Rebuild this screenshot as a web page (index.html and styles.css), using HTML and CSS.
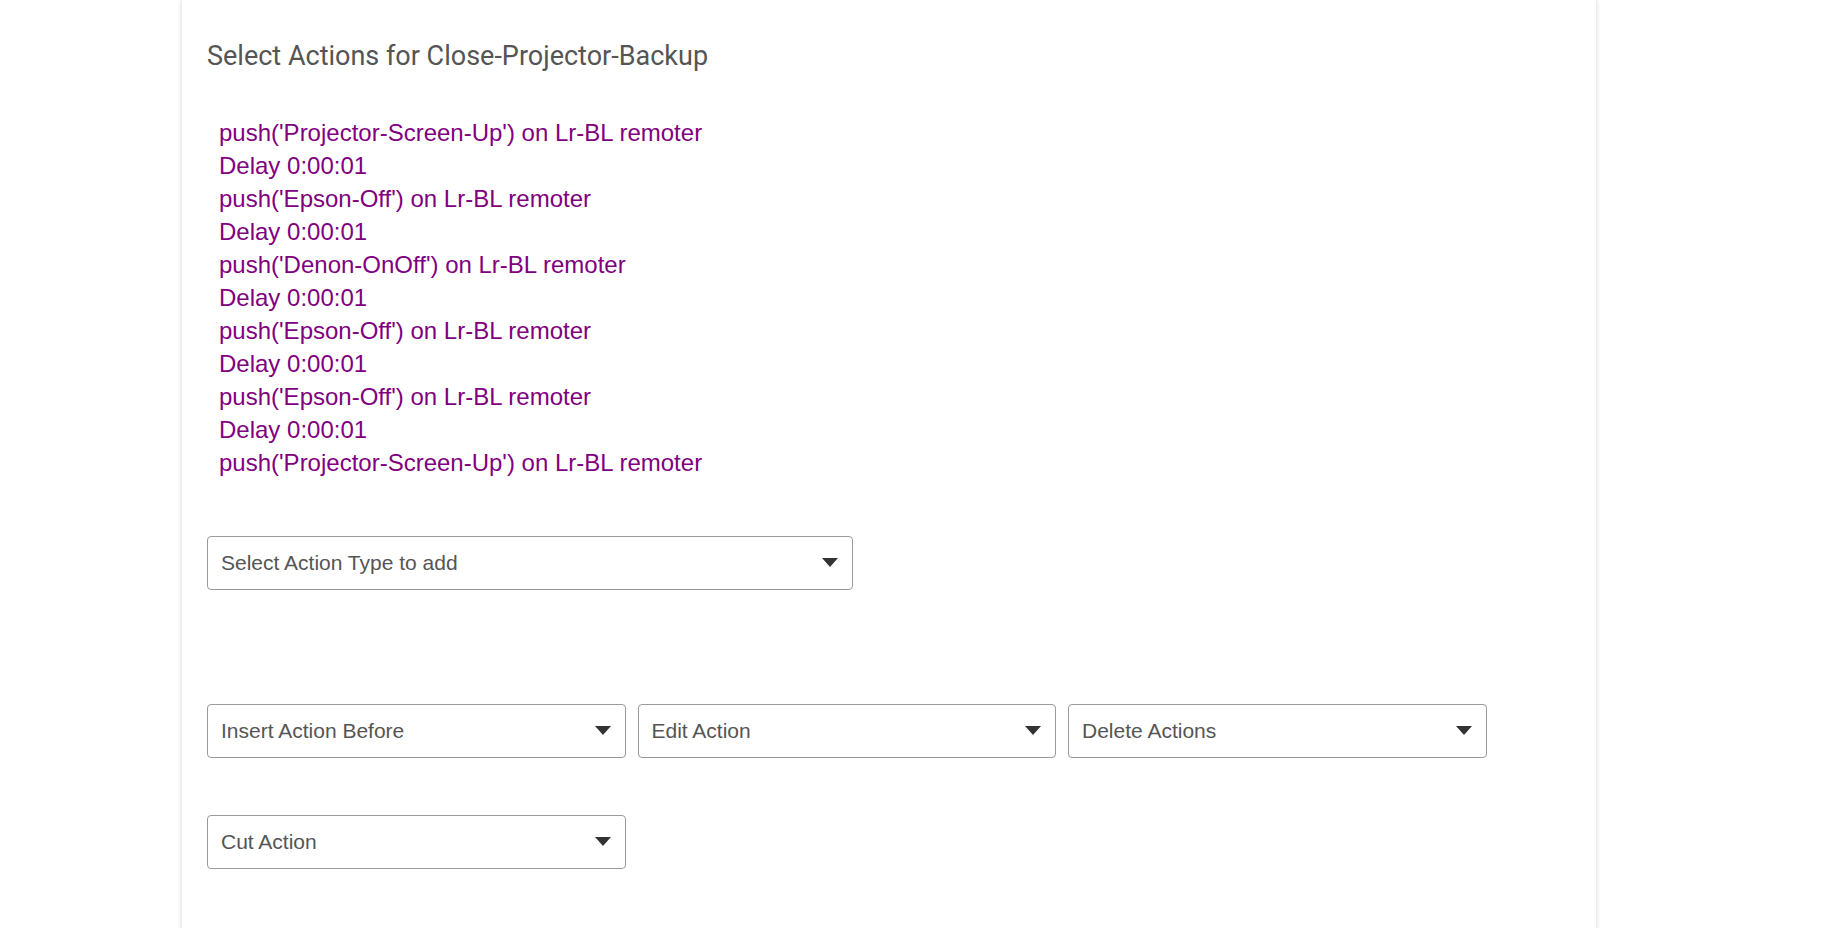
FILE: index.html
```html
<!DOCTYPE html>
<html>
<head>
<meta charset="utf-8">
<link rel="stylesheet" href="styles.css">
</head>
<body>
<div class="card">
  <h2 class="title">Select Actions for Close-Projector-Backup</h2>
  <ul class="actions">
    <li>push('Projector-Screen-Up') on Lr-BL remoter</li>
    <li>Delay 0:00:01</li>
    <li>push('Epson-Off') on Lr-BL remoter</li>
    <li>Delay 0:00:01</li>
    <li>push('Denon-OnOff') on Lr-BL remoter</li>
    <li>Delay 0:00:01</li>
    <li>push('Epson-Off') on Lr-BL remoter</li>
    <li>Delay 0:00:01</li>
    <li>push('Epson-Off') on Lr-BL remoter</li>
    <li>Delay 0:00:01</li>
    <li>push('Projector-Screen-Up') on Lr-BL remoter</li>
  </ul>
  <div class="row row-add">
    <div class="select wide"><span>Select Action Type to add</span><i class="caret"></i></div>
  </div>
  <div class="row row-edit">
    <div class="select"><span>Insert Action Before</span><i class="caret"></i></div>
    <div class="select"><span>Edit Action</span><i class="caret"></i></div>
    <div class="select"><span>Delete Actions</span><i class="caret"></i></div>
  </div>
  <div class="row row-cut">
    <div class="select"><span>Cut Action</span><i class="caret"></i></div>
  </div>
</div>
</body>
</html>
```
FILE: styles.css
```css
html, body {
  margin: 0;
  padding: 0;
  background: #ffffff;
}
body {
  height: 928px;
  overflow: hidden;
}
.card {
  margin-left: 182px;
  width: 1414px;
  min-height: 1100px;
  background: #ffffff;
  box-shadow: 0 0 5px rgba(0, 0, 0, 0.18);
  padding: 40px 25px 0 25px;
  box-sizing: border-box;
}
.title {
  margin: 0;
  font-family: Roboto, "Liberation Sans", sans-serif;
  font-weight: 400;
  font-size: 27px;
  line-height: 32px;
  color: #555555;
}
.actions {
  list-style: none;
  margin: 44px 0 0 0;
  padding: 0 0 0 12px;
  font-family: "Liberation Sans", Arial, sans-serif;
  font-size: 24px;
  line-height: 33px;
  color: #800080;
}
.row {
  display: flex;
  gap: 12px;
}
.row-add { margin-top: 56.5px; }
.row-edit { margin-top: 114px; }
.row-cut { margin-top: 57px; }
.select {
  box-sizing: border-box;
  width: 418.5px;
  height: 54px;
  border: 1px solid #9a9a9a;
  border-radius: 4px;
  display: flex;
  align-items: center;
  justify-content: space-between;
  padding: 0 14px 0 13px;
  font-family: "Liberation Sans", Arial, sans-serif;
  font-size: 21px;
  color: #555555;
}
.select.wide { width: 646px; }
.caret {
  width: 0;
  height: 0;
  border-left: 8px solid transparent;
  border-right: 8px solid transparent;
  border-top: 9px solid #333333;
}
```
